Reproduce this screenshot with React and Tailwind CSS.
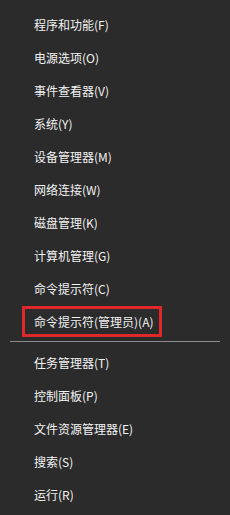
const groups = [
  [
    "程序和功能(F)",
    "电源选项(O)",
    "事件查看器(V)",
    "系统(Y)",
    "设备管理器(M)",
    "网络连接(W)",
    "磁盘管理(K)",
    "计算机管理(G)",
    "命令提示符(C)",
    "命令提示符(管理员)(A)",
  ],
  [
    "任务管理器(T)",
    "控制面板(P)",
    "文件资源管理器(E)",
    "搜索(S)",
    "运行(R)",
  ],
];

const MenuItem = ({ label, highlighted }) => (
  <div className="relative flex h-[33px] items-center pl-[34px] text-[12px] text-[#f2f2f2]">
    {highlighted && (
      <div className="absolute left-[22px] top-[1px] h-[31px] w-[140px] border-[3px] border-[#e0282b]" />
    )}
    <span className="relative">{label}</span>
  </div>
);

export default function App() {
  return (
    <div
      className="h-[515px] w-[230px] overflow-hidden bg-[#2b2b2b] pt-[8px]"
      style={{ fontFamily: '"Microsoft YaHei", "Noto Sans CJK SC", sans-serif' }}
    >
      {groups[0].map((label) => (
        <MenuItem key={label} label={label} highlighted={label === "命令提示符(管理员)(A)"} />
      ))}
      <div className="mx-[10px] mb-[4px] mt-[3px] h-px bg-[#8c8c8c]" />
      {groups[1].map((label) => (
        <MenuItem key={label} label={label} />
      ))}
    </div>
  );
}
